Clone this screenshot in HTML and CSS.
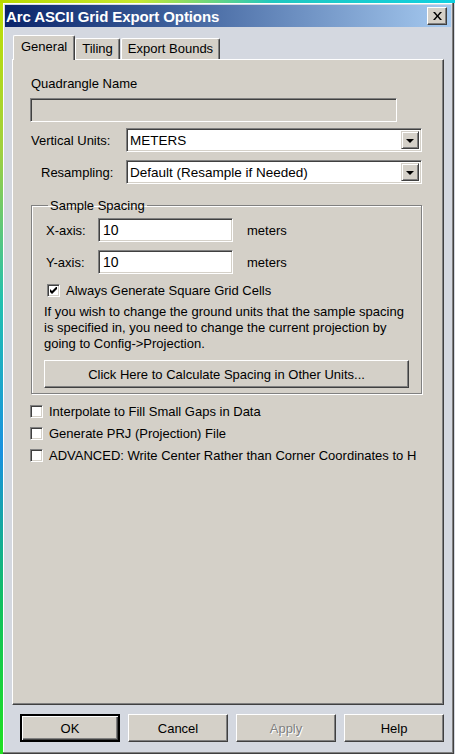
FILE: index.html
```html
<!DOCTYPE html>
<html lang="en">
<head>
    <meta charset="UTF-8">
    <meta name="viewport" content="width=device-width, initial-scale=1.0">
    <title>Arc ASCII Grid Export Options</title>
    <link rel="stylesheet" href="styles.css">
</head>
<body>

<div class="desktop">
    <div class="window">
        <div class="titlebar">
            <span class="title">Arc ASCII Grid Export Options</span>
            <button class="close-btn" aria-label="Close">
                <svg width="9" height="8" viewBox="0 0 9 8">
                    <path d="M0 0h2l2.5 3 2.5-3h2l-3.5 4 3.5 4h-2l-2.5-3-2.5 3h-2l3.5-4z" fill="#000"/>
                </svg>
            </button>
        </div>

        <div class="tabs">
            <div class="tab active">General</div>
            <div class="tab">Tiling</div>
            <div class="tab">Export Bounds</div>
        </div>

        <div class="panel">
            <div class="label">Quadrangle Name</div>
            <div class="textbox disabled wide"></div>

            <div class="field-row first">
                <span class="field-label">Vertical Units:</span>
                <div class="combo">
                    <span class="combo-text">METERS</span>
                    <span class="combo-btn"><i class="arrow"></i></span>
                </div>
            </div>

            <div class="field-row">
                <span class="field-label indent">Resampling:</span>
                <div class="combo">
                    <span class="combo-text">Default (Resample if Needed)</span>
                    <span class="combo-btn"><i class="arrow"></i></span>
                </div>
            </div>

            <fieldset class="group">
                <legend>Sample Spacing</legend>

                <div class="axis-row">
                    <span class="axis-label">X-axis:</span>
                    <div class="textbox axis">10</div>
                    <span class="unit">meters</span>
                </div>
                <div class="axis-row">
                    <span class="axis-label">Y-axis:</span>
                    <div class="textbox axis">10</div>
                    <span class="unit">meters</span>
                </div>

                <label class="check square">
                    <span class="box">
                        <svg width="7" height="7" viewBox="0 0 7 7">
                            <path d="M0 2v3l2 2 5-5v-3l-5 5z" fill="#000"/>
                        </svg>
                    </span>
                    Always Generate Square Grid Cells
                </label>

                <p class="note">If you wish to change the ground units that the sample spacing is specified in, you need to change the current projection by going to Config-&gt;Projection.</p>

                <button class="btn calc">Click Here to Calculate Spacing in Other Units...</button>
            </fieldset>

            <div class="options">
                <label class="check"><span class="box"></span>Interpolate to Fill Small Gaps in Data</label>
                <label class="check"><span class="box"></span>Generate PRJ (Projection) File</label>
                <label class="check"><span class="box"></span>ADVANCED: Write Center Rather than Corner Coordinates to H</label>
            </div>
        </div>

        <div class="actions">
            <button class="btn default">OK</button>
            <button class="btn">Cancel</button>
            <button class="btn disabled">Apply</button>
            <button class="btn">Help</button>
        </div>
    </div>
</div>

</body>
</html>
```

FILE: styles.css
```css
html, body {
    margin: 0;
    padding: 0;
}
body {
    font-family: "Liberation Sans", Arial, sans-serif;
    font-size: 13px;
    color: #000;
    background: #d4d8e0;
}
.desktop {
    width: 455px;
    height: 754px;
    box-sizing: border-box;
    padding: 3px 1px 0 3px;
    background:
        linear-gradient(to right, #b8d800, #c8e830 30%, #20c8c0 60%, #10d0e0 100%) top / 100% 3px no-repeat,
        linear-gradient(to bottom, #c0e000, #a0d040 20%, #20c0b0 40%, #1890e0 60%, #10c060 80%, #20e020) left / 3px 100% no-repeat,
        #d4d8e0;
}
.window {
    height: 751px;
    box-sizing: border-box;
    background: #d4d8e0;
    border-right: 1px solid #404040;
    border-bottom: 1px solid #404040;
    box-shadow: inset -1px -1px #808080, inset 1px 1px #fff;
    padding: 2px 2px 0 2px;
    display: flex;
    flex-direction: column;
}

/* caption */
.titlebar {
    height: 22px;
    display: flex;
    align-items: center;
    justify-content: space-between;
    padding: 0 4px 0 1px;
    background: linear-gradient(to right, #0a246a, #3a5c98 35%, #a6caf0);
}
.title {
    color: #fff;
    font-weight: bold;
    font-size: 15px;
    letter-spacing: -0.1px;
}
.close-btn {
    width: 20px;
    height: 18px;
    padding: 0;
    display: flex;
    align-items: center;
    justify-content: center;
    background: #d4d0c8;
    border: 1px solid;
    border-color: #fff #404040 #404040 #fff;
    box-shadow: inset -1px -1px #808080;
}

/* tabs */
.tabs {
    display: flex;
    align-items: flex-end;
    margin: 9px 0 0 8px;
    height: 23px;
}
.tab {
    height: 20px;
    line-height: 20px;
    padding: 0 6px;
    font-size: 13px;
    background: #d4d0c8;
    border: 1px solid;
    border-color: #fff #404040 transparent #fff;
    border-bottom: none;
    box-shadow: inset -1px 0 #808080;
    border-radius: 2px 2px 0 0;
    margin-left: 1px;
}
.tab.active {
    line-height: 22px;
    padding: 0 7px;
    margin-left: 0;
    margin-right: -1px;
    position: relative;
    z-index: 1;
    margin-bottom: -1px;
    height: 24px;
}
.panel {
    margin: 0 7px;
    height: 646px;
    box-sizing: border-box;
    background: #d4d0c8;
    border: 1px solid;
    border-color: #fff #404040 #404040 #fff;
    box-shadow: inset -1px -1px #808080;
    padding: 16px 0 0 17px;
}

.label {
    height: 16px;
    line-height: 16px;
    margin-left: 1px;
}

/* sunken edit fields */
.textbox {
    box-sizing: border-box;
    height: 24px;
    background: #fff;
    border: 1px solid;
    border-color: #808080 #fff #fff #808080;
    box-shadow: inset 1px 1px #404040, inset -1px -1px #d4d0c8;
    padding: 2px 4px;
    line-height: 19px;
    font-size: 14px;
}
.textbox.disabled {
    background: #d4d0c8;
}
.textbox.wide {
    width: 367px;
    margin-top: 6px;
}

.field-row {
    display: flex;
    align-items: center;
    margin-top: 8px;
}
.field-row.first {
    margin-top: 6px;
}
.field-label {
    width: 95px;
    margin-left: 1px;
}
.field-label.indent {
    padding-left: 10px;
    width: 85px;
}
.combo {
    width: 296px;
    height: 24px;
    box-sizing: border-box;
    display: flex;
    align-items: center;
    background: #fff;
    border: 1px solid;
    border-color: #808080 #fff #fff #808080;
    box-shadow: inset 1px 1px #404040, inset -1px -1px #d4d0c8;
    padding: 2px 2px 2px 3px;
}
.combo-text {
    flex: 1;
    font-size: 13.5px;
}
.combo-btn {
    width: 18px;
    height: 18px;
    box-sizing: border-box;
    display: flex;
    align-items: center;
    justify-content: center;
    background: #d4d0c8;
    border: 1px solid;
    border-color: #d4d0c8 #404040 #404040 #d4d0c8;
    box-shadow: inset 1px 1px #fff, inset -1px -1px #808080;
}
.arrow {
    width: 0;
    height: 0;
    border-left: 4px solid transparent;
    border-right: 4px solid transparent;
    border-top: 4px solid #000;
    margin-top: 1px;
}

/* etched group */
.group {
    width: 391px;
    box-sizing: border-box;
    margin: 14px 0 0 1px;
    padding: 5px 12px 5px 12px;
    border: 1px solid #808080;
    box-shadow: inset 1px 1px #fff, 1px 1px #fff;
}
.group legend {
    padding: 0 2px;
    margin-left: 4px;
    font-size: 13px;
}
.axis-row {
    display: flex;
    align-items: center;
    height: 24px;
    margin-bottom: 8px;
}
.axis-label {
    width: 54px;
    padding-left: 2px;
    box-sizing: border-box;
}
.textbox.axis {
    width: 135px;
}
.unit {
    margin-left: 14px;
}

.check {
    display: flex;
    align-items: center;
    height: 16px;
}
.box {
    width: 13px;
    height: 13px;
    box-sizing: border-box;
    background: #fff;
    border: 1px solid;
    border-color: #808080 #fff #fff #808080;
    box-shadow: inset 1px 1px #404040, inset -1px -1px #d4d0c8;
    display: flex;
    align-items: center;
    justify-content: center;
    margin-right: 6px;
    flex: none;
}
.check.square {
    margin: 0 0 0 3px;
}
.note {
    margin: 6px 0 0 0;
    line-height: 16px;
    font-size: 13px;
}

/* raised push buttons */
.btn {
    box-sizing: border-box;
    height: 28px;
    font-family: inherit;
    font-size: 13px;
    color: #000;
    background: #d4d0c8;
    border: 1px solid;
    border-color: #fff #404040 #404040 #fff;
    box-shadow: inset -1px -1px #808080;
    padding: 0;
}
.btn.calc {
    display: block;
    width: 365px;
    margin-top: 8px;
    height: 28px;
}
.btn.default {
    border-width: 2px;
    border-color: #000;
    box-shadow: inset 1px 1px #fff, inset -1px -1px #404040, inset -2px -2px #808080;
}
.btn.disabled {
    color: #808080;
    text-shadow: 1px 1px #fff;
}

.options {
    margin-top: 9px;
    display: flex;
    flex-direction: column;
    gap: 6px;
}

.actions {
    display: flex;
    gap: 8px;
    padding: 9px 0 0 15px;
}
.actions .btn {
    width: 100px;
}
```
